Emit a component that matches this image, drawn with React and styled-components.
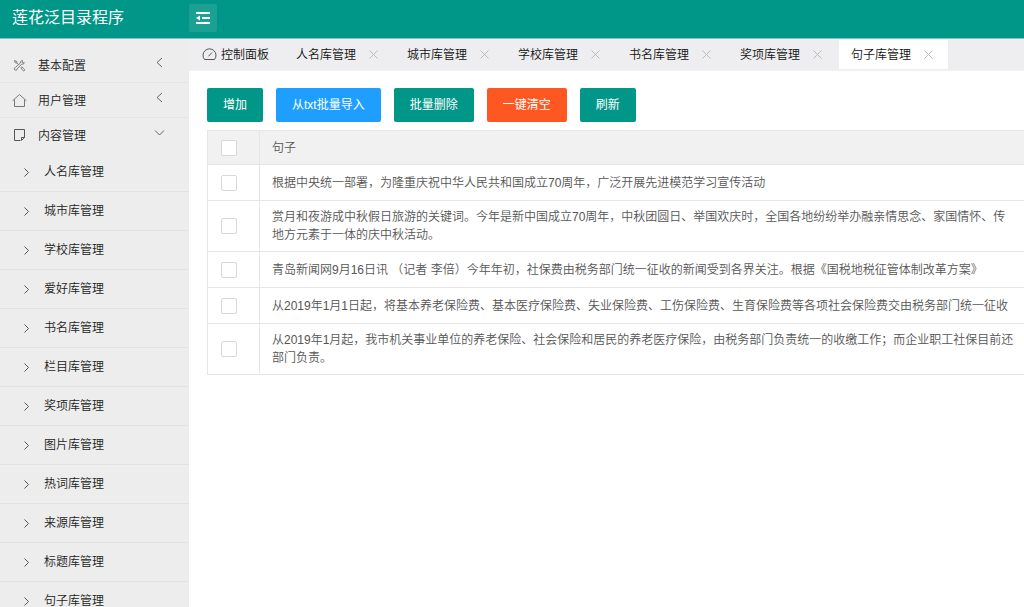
import React from 'react';
import styled, { createGlobalStyle } from 'styled-components';

const GlobalStyle = createGlobalStyle`
  * { box-sizing: border-box; }
  body {
    margin: 0;
    background: #fff;
    color: #333;
    font-family: "Liberation Sans", "Noto Sans CJK SC", sans-serif;
    font-size: 12px;
    font-weight: 350;
    line-height: 18px;
  }
  button, input { font: inherit; margin: 0; }
`;

const Page = styled.div`
  display: flex;
  flex-direction: column;
  height: 100vh;
  overflow: hidden;
`;

const Header = styled.header`
  display: flex;
  flex: none;
  height: 39px;
  background: #009688;
  border-bottom: 1px solid #7cc8c1;
`;

const Brand = styled.h1`
  width: 189px;
  margin: 0;
  padding-left: 12px;
  color: #fff;
  font-size: 16px;
  font-weight: 400;
  line-height: 36px;
`;

const CollapseButton = styled.button`
  display: flex;
  align-items: center;
  justify-content: center;
  width: 28px;
  height: 28px;
  margin-top: 4px;
  padding: 0;
  border: 0;
  border-radius: 2px;
  background: #1ba194;
  color: #fff;
`;

const Body = styled.div`
  display: flex;
  flex: 1;
  min-height: 0;
`;

const Sidebar = styled.nav`
  flex: none;
  width: 189px;
  padding-top: 9px;
  overflow: hidden;
  background: #ededed;
`;

const MenuList = styled.ul`
  margin: 0;
  padding: 0;
  list-style: none;
`;

const MenuLink = styled.a`
  display: flex;
  align-items: center;
  height: 35px;
  padding: 0 24px 0 12px;
  border-bottom: 1px solid ${(p) => (p.$open ? 'transparent' : '#e5e5e5')};
  color: #222;
  text-decoration: none;
`;

const MenuLabel = styled.span`
  flex: 1;
  padding: 2px 0 0 11px;
`;

const ArrowSlot = styled.span`
  display: flex;
  padding-bottom: 6px;
`;

const SubLink = styled.a`
  display: flex;
  align-items: center;
  gap: 12px;
  height: 39px;
  padding-left: 21px;
  border-bottom: 1px solid #e2e2e2;
  color: #222;
  text-decoration: none;
`;

const Main = styled.main`
  flex: 1;
  min-width: 0;
  overflow: hidden;
`;

const TabBar = styled.div`
  display: flex;
  height: 32px;
  padding: 1px 0;
  background: #eeeef0;
  border-bottom: 1px solid #f2f2f2;
`;

const HomeTab = styled.a`
  display: flex;
  align-items: center;
  gap: 4px;
  width: 95px;
  padding-left: 13px;
  color: #111;
  text-decoration: none;
`;

const Tab = styled.div`
  display: flex;
  align-items: center;
  justify-content: space-between;
  width: 109px;
  margin-right: 2px;
  padding: 0 15px 0 12px;
  background: ${(p) => (p.$active ? '#fff' : 'transparent')};
`;

const TabLink = styled.a`
  color: #111;
  text-decoration: none;
`;

const CloseButton = styled.button`
  display: flex;
  padding: 0;
  border: 0;
  background: none;
  color: #bbb;
`;

const Content = styled.section`
  padding: 17px 0 0 18px;
`;

const Toolbar = styled.div`
  display: flex;
  gap: 13px;
  margin-bottom: 8px;
`;

const tones = { green: '#009688', blue: '#1e9fff', orange: '#ff5722' };

const Button = styled.button`
  height: 34px;
  padding: 0 16px;
  border: 0;
  border-radius: 2px;
  background: ${(p) => tones[p.$tone]};
  color: #fff;
  font-weight: 400;
  white-space: nowrap;
`;

const Table = styled.table`
  min-width: 110%;
  border-left: 1px solid #e6e6e6;
  border-top: 1px solid #e6e6e6;
  border-collapse: separate;
  border-spacing: 0;
  color: #555;
  white-space: nowrap;
`;

const Cell = styled.td`
  height: ${(p) => (p.$head ? 34 : 36)}px;
  padding: 7px 12px;
  border-bottom: 1px solid #e6e6e6;
  background: ${(p) => (p.$head ? '#f1f1f1' : '#fff')};
  font-weight: inherit;
  text-align: left;
`;

const CheckCell = styled(Cell)`
  width: 52px;
  padding-left: 13px;
  border-right: 1px solid #e6e6e6;
`;

const Checkbox = styled.input`
  display: block;
  width: 16px;
  height: 16px;
  appearance: none;
  border: 1px solid #d9d9d9;
  border-radius: 2px;
  background: #fff;
`;

const Svg = ({ w, h = w, sw = 1, children }) => (
  <svg width={w} height={h} viewBox={`0 0 ${w} ${h}`} fill="none" stroke="currentColor" strokeWidth={sw} aria-hidden="true">
    {children}
  </svg>
);

const OutdentIcon = () => (
  <Svg w={14} sw={2}>
    <path d="M0 2h14M6 7h8M0 12h14" />
    <path d="M0 7l4-2.500v5z" fill="currentColor" stroke="none" />
  </Svg>
);

const ToolsIcon = () => (
  <Svg w={15}>
    <g stroke="#808080">
      <path d="M2.500 2.500l2 .8.7 1.700 1.800 1.900M2.500 2.500l.6 2 1.900.7" />
      <path d="M12.300 4.600a2 2 0 0 1-2.600 1.500L5.300 10.700a1.500 1.500 0 1 1-1.700-1.400L8.400 5a2 2 0 0 1 2.200-2.400L9.900 4l1 .9z" />
      <path d="M8.800 9.700l1-.9 2.700 2.500a1 1 0 0 1-1.400 1.400z" />
    </g>
  </Svg>
);

const HomeIcon = () => (
  <Svg w={15}>
    <path stroke="#777" d="M.7 7.700L7.500 1.500l6.800 6.200M2.500 6.500v7h10v-7" />
  </Svg>
);

const NoteIcon = () => (
  <Svg w={15}>
    <path stroke="#555" d="M8.500 12.500h-6v-11h10v8l-3 3v-3h3" />
  </Svg>
);

const GaugeIcon = () => (
  <Svg w={15}>
    <path stroke="#555" d="M2.500 12.500a6.500 6.500 0 1 1 10 0z" />
    <path stroke="#555" d="M6.500 9.300l3.500-3.800" />
  </Svg>
);

const ChevronLeft = () => (
  <Svg w={11}><path stroke="#666" d="M8 1L3 5.500 8 10" /></Svg>
);
const ChevronDown = () => (
  <Svg w={11}><path stroke="#666" d="M1 3.500L5.500 8 10 3.500" /></Svg>
);
const ChevronRight = () => (
  <Svg w={11}><path stroke="#555" d="M3.500 1.500l4 4-4 4" /></Svg>
);
const CloseIcon = () => (
  <Svg w={9}><path d="M.5.5l8 8M8.500.5l-8 8" /></Svg>
);

const menu = [
  { label: '基本配置', Icon: ToolsIcon },
  { label: '用户管理', Icon: HomeIcon },
  {
    label: '内容管理',
    Icon: NoteIcon,
    children: [
      '人名库管理', '城市库管理', '学校库管理', '爱好库管理', '书名库管理', '栏目库管理',
      '奖项库管理', '图片库管理', '热词库管理', '来源库管理', '标题库管理', '句子库管理',
    ],
  },
];

const tabs = ['人名库管理', '城市库管理', '学校库管理', '书名库管理', '奖项库管理', '句子库管理'];

const actions = [
  ['增加', 'green'],
  ['从txt批量导入', 'blue'],
  ['批量删除', 'green'],
  ['一键清空', 'orange'],
  ['刷新', 'green'],
];

const sentences = [
  ['根据中央统一部署，为隆重庆祝中华人民共和国成立70周年，广泛开展先进模范学习宣传活动'],
  [
    '赏月和夜游成中秋假日旅游的关键词。今年是新中国成立70周年，中秋团圆日、举国欢庆时，全国各地纷纷举办融亲情思念、家国情怀、传',
    '地方元素于一体的庆中秋活动。',
  ],
  ['青岛新闻网9月16日讯 （记者 李倍）今年年初，社保费由税务部门统一征收的新闻受到各界关注。根据《国税地税征管体制改革方案》'],
  ['从2019年1月1日起，将基本养老保险费、基本医疗保险费、失业保险费、工伤保险费、生育保险费等各项社会保险费交由税务部门统一征收'],
  [
    '从2019年1月起，我市机关事业单位的养老保险、社会保险和居民的养老医疗保险，由税务部门负责统一的收缴工作；而企业职工社保目前还',
    '部门负责。',
  ],
];

export default function App() {
  return (
    <Page>
      <GlobalStyle />
      <Header>
        <Brand>莲花泛目录程序</Brand>
        <CollapseButton type="button" aria-label="收起菜单"><OutdentIcon /></CollapseButton>
      </Header>
      <Body>
        <Sidebar>
          <MenuList>
            {menu.map(({ label, Icon, children }) => (
              <li key={label}>
                <MenuLink href="#" $open={!!children}>
                  <Icon />
                  <MenuLabel>{label}</MenuLabel>
                  <ArrowSlot>{children ? <ChevronDown /> : <ChevronLeft />}</ArrowSlot>
                </MenuLink>
                {children && (
                  <MenuList>
                    {children.map((name) => (
                      <li key={name}>
                        <SubLink href="#"><ChevronRight />{name}</SubLink>
                      </li>
                    ))}
                  </MenuList>
                )}
              </li>
            ))}
          </MenuList>
        </Sidebar>
        <Main>
          <TabBar>
            <HomeTab href="#"><GaugeIcon />控制面板</HomeTab>
            {tabs.map((name) => (
              <Tab key={name} $active={name === '句子库管理'}>
                <TabLink href="#">{name}</TabLink>
                <CloseButton type="button" aria-label={`关闭${name}`}><CloseIcon /></CloseButton>
              </Tab>
            ))}
          </TabBar>
          <Content>
            <Toolbar>
              {actions.map(([name, tone]) => (
                <Button key={name} type="button" $tone={tone}>{name}</Button>
              ))}
            </Toolbar>
            <Table>
              <thead>
                <tr>
                  <CheckCell as="th" $head><Checkbox type="checkbox" aria-label="全选" /></CheckCell>
                  <Cell as="th" $head>句子</Cell>
                </tr>
              </thead>
              <tbody>
                {sentences.map((lines, i) => (
                  <tr key={lines[0]}>
                    <CheckCell><Checkbox type="checkbox" aria-label={`选择第${i + 1}行`} /></CheckCell>
                    <Cell>
                      {lines.map((line, n) => (
                        <React.Fragment key={line}>{n > 0 && <br />}{line}</React.Fragment>
                      ))}
                    </Cell>
                  </tr>
                ))}
              </tbody>
            </Table>
          </Content>
        </Main>
      </Body>
    </Page>
  );
}
